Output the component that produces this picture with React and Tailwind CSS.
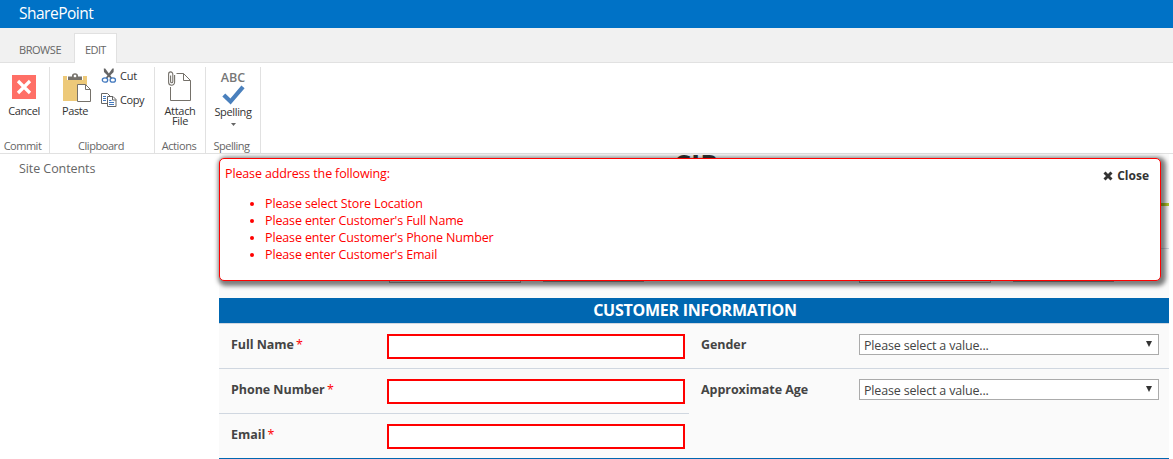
import React from "react";

function CancelIcon() {
  return (
    <svg width="24" height="24" viewBox="0 0 24 24" className="block">
      <rect width="24" height="24" fill="#ff6f66" />
      <path d="M6 6L18 18M18 6L6 18" stroke="#fff" strokeWidth="3.2" />
    </svg>
  );
}

function PasteIcon() {
  return (
    <svg width="29" height="31" viewBox="0 0 29 31" className="block">
      <rect x="0" y="4" width="24" height="25" fill="#edc979" />
      <path d="M4 4h16v4H4z" fill="#fff" />
      <path d="M5 8V4.500h4V4a3 2.800 0 0 1 6 0v.5h4V8z" fill="#75716a" />
      <rect x="10.800" y="2.800" width="2.400" height="2.400" fill="#fff" />
      <path d="M14.500 12.500h8l5 5v12h-13z" fill="#fff" stroke="#75716a" />
      <path d="M22.500 12.500v5h5" fill="none" stroke="#75716a" />
    </svg>
  );
}

function CutIcon() {
  return (
    <svg width="16" height="16" viewBox="0 0 16 16" className="block">
      <path d="M2.800 0.500L4.200 0.500L11.200 10L9.600 10.400L3 4z" fill="#666" />
      <path d="M12.800 0.500L11.400 0.500L4.600 10L6.200 10.400L12.600 4z" fill="#666" />
      <ellipse cx="4" cy="12" rx="2.700" ry="2.200" fill="none" stroke="#4178be" strokeWidth="1.300" />
      <ellipse cx="11.800" cy="12" rx="2.700" ry="2.200" fill="none" stroke="#4178be" strokeWidth="1.300" />
    </svg>
  );
}

function CopyIcon() {
  return (
    <svg width="16" height="14" viewBox="0 0 16 14" className="block">
      <path d="M.5.5h6l3 3v7h-9z" fill="#fff" stroke="#666" />
      <path d="M2 3.500h3M2 5.500h3M2 7.500h3" stroke="#4178be" />
      <path d="M6.500 3.500h5.500l3 3v7h-8.500z" fill="#fff" stroke="#666" />
      <path d="M11.500 3.500v3.500h3.500" fill="none" stroke="#666" />
      <path d="M8 7.500h2.500M8 9.500h5M8 11.500h5" stroke="#4178be" />
    </svg>
  );
}

function AttachIcon() {
  return (
    <svg width="24" height="31" viewBox="0 0 24 31" className="block">
      <path d="M2.500 16v13.500h20V9.500l-7-7H8.500" fill="none" stroke="#75716a" />
      <path d="M15.500 2.500v7h7" fill="none" stroke="#75716a" />
      <path d="M2.600 4.500v6a1.100 1.300 0 0 0 2.200 0V3.200a2 2.200 0 0 0-4.200 0v8a3 3 0 0 0 6 0V4" fill="none" stroke="#75716a" strokeWidth="1.100" />
    </svg>
  );
}

function CheckIcon() {
  return (
    <svg width="23" height="20" viewBox="0 0 23 20" className="block">
      <path d="M1.800 10L8.500 16.500L21 1.800" fill="none" stroke="#4a80bd" strokeWidth="4.200" />
    </svg>
  );
}

function Group({ className, label, labelClass, children }) {
  return (
    <div className={`flex h-[86px] shrink-0 flex-col border-r border-[#e1e1e1] ${className}`}>
      <div className="h-[71px] shrink-0">{children}</div>
      <div className={`text-center text-[11px] leading-[16px] whitespace-nowrap text-[#666] ${labelClass}`}>{label}</div>
    </div>
  );
}

function Field({ label, required, children }) {
  return (
    <div className="flex h-[45px] border-t border-[#d0d7e0] pl-3">
      <div className="pt-3 text-[12.500px] leading-[18px] font-bold tracking-[-0.050px] whitespace-nowrap text-[#444]">
        {label}
        {required && <span className="-ml-px font-normal text-[#f00]"> *</span>}
      </div>
      <div className="ml-auto pt-[10px]">{children}</div>
    </div>
  );
}

function RedInput({ label }) {
  return <input aria-label={label} className="mr-1 block h-[25px] w-[298px] border-2 border-[#f00] bg-white" />;
}

function Select() {
  return (
    <div className="mr-[10px] flex h-[21px] w-[300px] justify-between border border-[#ababab] bg-white pr-[5px] pl-1 text-[12.500px] leading-[21px] text-[#444]">
      <span className="tracking-[-0.170px]">Please select a value...</span>
      <svg width="8" height="8" viewBox="0 0 8 8" className="mt-[5px]">
        <path d="M1 1h6L4 7z" fill="#333" />
      </svg>
    </div>
  );
}

function CoveredSelects({ className }) {
  return (
    <div className={`flex shrink-0 gap-[22px] pt-[13px] pl-[170px] ${className}`}>
      <div className="h-[21px] w-[132px] border border-[#ababab]" />
      <div className="h-[20px] w-[101px] border border-[#ababab]" />
    </div>
  );
}

export default function App() {
  return (
    <div className="flex h-[459px] w-[1173px] flex-col overflow-hidden bg-white font-['Open_Sans','Segoe_UI',sans-serif]">
      <header className="h-[28px] shrink-0 bg-[#0072c6] pl-[19px] text-[15.500px] leading-[26px] text-white">
        <span className="tracking-[-0.500px]">SharePoint</span>
      </header>
      <nav className="flex h-[35px] shrink-0 items-end border-b border-[#e1e1e1] bg-[#f1f1f1] text-[11px] text-[#666]">
        <div className="h-[23px] w-[74px] pl-[19px] leading-[21px] tracking-[-0.450px]">BROWSE</div>
        <div className="-mb-px h-[30px] w-[43px] border border-b-0 border-[#e1e1e1] bg-white pl-[10px] leading-[32px] tracking-[-0.600px]">EDIT</div>
      </nav>
      <div className="flex h-[91px] shrink-0 border-b border-[#e1e1e1] pt-1 text-[11px] text-[#333]">
        <Group label="Commit" className="w-[50px]" labelClass="pr-[4px] tracking-[-0.500px]">
          <div className="flex flex-col items-center pt-2 pr-px">
            <CancelIcon />
            <span className="mt-[4px] leading-[15px] tracking-[-0.400px]">Cancel</span>
          </div>
        </Group>
        <Group label="Clipboard" className="w-[105px]" labelClass="pr-[2px] tracking-[-0.450px]">
          <div className="flex">
            <div className="w-[51px] pt-[5px] pl-[13px]">
              <PasteIcon />
              <div className="-ml-px leading-[15px] tracking-[-0.400px]">Paste</div>
            </div>
            <div className="flex flex-col gap-[9px] pt-px">
              <div className="flex h-[15px] items-center gap-[3px] leading-[15px]">
                <CutIcon />
                <span className="tracking-[-0.200px]">Cut</span>
              </div>
              <div className="flex h-[15px] items-center gap-[3px] leading-[15px]">
                <CopyIcon />
                <span className="tracking-[-0.400px]">Copy</span>
              </div>
            </div>
          </div>
        </Group>
        <Group label="Actions" className="w-[51px]" labelClass="pr-[2px] tracking-[-0.400px]">
          <div className="flex flex-col items-center pt-1">
            <AttachIcon />
            <span className="mt-[4px] text-center leading-[10px] tracking-[-0.300px]">
              Attach
              <br />
              File
            </span>
          </div>
        </Group>
        <Group label="Spelling" className="w-[55px]" labelClass="pr-[3px] tracking-[-0.500px]">
          <div className="flex flex-col items-center pt-[3px]">
            <span className="text-[12.500px] leading-[15px] font-semibold text-[#777]">ABC</span>
            <CheckIcon />
            <span className="-mt-px leading-[15px] tracking-[-0.350px]">Spelling</span>
            <svg width="5" height="3" viewBox="0 0 5 3" className="mt-[4px] block">
              <path d="M0 0h5L2.500 3z" fill="#666" />
            </svg>
          </div>
        </Group>
      </div>
      <div className="flex min-h-0 flex-1">
        <aside className="w-[219px] shrink-0 pt-[5px] pl-[19px] text-[12.500px] leading-[20px] tracking-[-0.080px] text-[#666]">Site Contents</aside>
        <main className="relative h-[305px] w-[950px] shrink-0">
          <div className="flex h-[144px] flex-col bg-[#fafafa]">
            <h1 className="h-[49px] shrink-0 pl-[3px] text-center text-[28px] leading-[22px] font-bold text-[#333]">CIP</h1>
            <div className="h-[3px] shrink-0 bg-[#b5cc2c]" />
            <div className="h-[43px] shrink-0 border-b border-[#d0d7e0]" />
            <div className="flex flex-1">
              <CoveredSelects className="w-[470px]" />
              <CoveredSelects className="w-[480px]" />
            </div>
          </div>
          <h2 className="h-[25px] bg-[#0067b1] pl-[2px] text-center text-[16px] leading-[24px] font-bold text-white">
            <span className="tracking-[-0.250px]">CUSTOMER INFORMATION</span>
          </h2>
          <div className="flex h-[136px] border-b border-[#0067b1] bg-[#fafafa]">
            <div className="w-[470px]">
              <Field label="Full Name" required>
                <RedInput label="Full Name" />
              </Field>
              <Field label="Phone Number" required>
                <RedInput label="Phone Number" />
              </Field>
              <Field label="Email" required>
                <RedInput label="Email" />
              </Field>
            </div>
            <div className="w-[480px]">
              <Field label="Gender">
                <Select />
              </Field>
              <Field label="Approximate Age">
                <Select />
              </Field>
            </div>
          </div>
          <section className="absolute top-[4px] left-0 flex h-[123px] w-[942px] justify-between rounded-[5px] border border-[#f00] bg-white px-[5px] text-[12.500px] leading-[17px] text-[#f00] shadow-[2px_2px_4px_3px_rgba(0,0,0,0.5)]">
            <div className="pt-[6px] tracking-[-0.140px]">
              <p>Please address the following:</p>
              <ul className="mt-[13px] list-disc pl-[40px]">
                <li>Please select Store Location</li>
                <li>Please enter Customer's Full Name</li>
                <li>Please enter Customer's Phone Number</li>
                <li>Please enter Customer's Email</li>
              </ul>
            </div>
            <div className="flex h-[17px] items-center gap-1 pt-[15px] pr-[6px] text-[12px] font-bold text-[#333]">
              <svg width="10" height="10" viewBox="0 0 10 10" className="mt-[1px]">
                <path d="M1.500 1.500L8.500 8.500M8.500 1.500L1.500 8.500" stroke="#333" strokeWidth="2.900" />
              </svg>
              <span>Close</span>
            </div>
          </section>
        </main>
      </div>
    </div>
  );
}
